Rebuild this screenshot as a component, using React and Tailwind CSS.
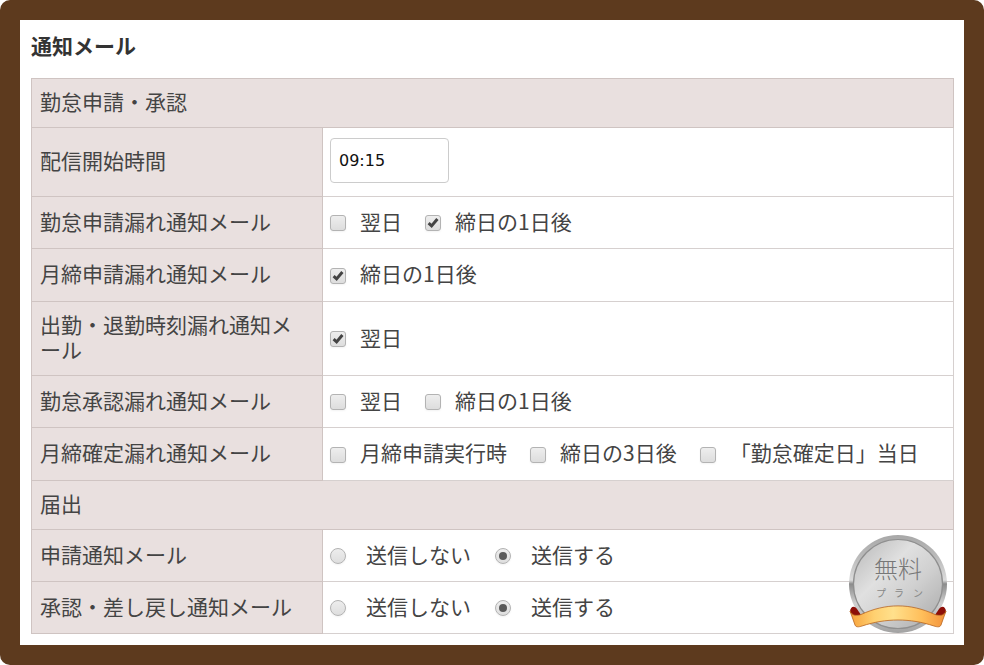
import { useState } from "react";
import clsx from "clsx";

const sections = [
  {
    title: "勤怠申請・承認",
    rows: [
      { id: "start", label: "配信開始時間", type: "time", height: "h-[69px]" },
      {
        id: "daily-missing",
        label: "勤怠申請漏れ通知メール",
        type: "checkbox",
        options: [
          { label: "翌日", checked: false },
          { label: "締日の1日後", checked: true },
        ],
      },
      {
        id: "monthly-missing",
        label: "月締申請漏れ通知メール",
        type: "checkbox",
        height: "h-[53px]",
        options: [{ label: "締日の1日後", checked: true }],
      },
      {
        id: "clock-missing",
        label: "出勤・退勤時刻漏れ通知メール",
        type: "checkbox",
        height: "h-[74px]",
        options: [{ label: "翌日", checked: true }],
      },
      {
        id: "approval-missing",
        label: "勤怠承認漏れ通知メール",
        type: "checkbox",
        options: [
          { label: "翌日", checked: false },
          { label: "締日の1日後", checked: false },
        ],
      },
      {
        id: "closing-missing",
        label: "月締確定漏れ通知メール",
        type: "checkbox",
        height: "h-[53px]",
        options: [
          { label: "月締申請実行時", checked: false },
          { label: "締日の3日後", checked: false },
          { label: "「勤怠確定日」当日", checked: false },
        ],
      },
    ],
  },
  {
    title: "届出",
    rows: [
      { id: "request", label: "申請通知メール", type: "radio" },
      { id: "approve", label: "承認・差し戻し通知メール", type: "radio" },
    ],
  },
];

const CheckOption = ({ label, checked }) => (
  <label className="flex items-center gap-3.5">
    <span className="mt-1 grid size-4 shrink-0">
      <input
        type="checkbox"
        defaultChecked={checked}
        className="peer col-start-1 row-start-1 size-4 appearance-none rounded-[3px] border border-[#b3b3b3] bg-linear-to-b from-[#eeeeee] to-[#dddddd] shadow-xs"
      />
      <svg
        viewBox="0 0 16 16"
        className="pointer-events-none invisible col-start-1 row-start-1 size-4 peer-checked:visible"
      >
        <path d="M3.6 8.2 L6.6 10.9 L12.4 4" fill="none" stroke="#444444" strokeWidth="3" />
      </svg>
    </span>
    {label}
  </label>
);

const RadioOption = ({ name, label, checked, onChange }) => (
  <label className="flex items-center gap-5">
    <span className="mt-1 grid size-4 shrink-0 place-items-center">
      <input
        type="radio"
        name={name}
        checked={checked}
        onChange={onChange}
        className="peer col-start-1 row-start-1 size-4 appearance-none rounded-full border border-[#b3b3b3] bg-linear-to-b from-[#ededed] to-[#dedede] shadow-xs"
      />
      <span className="pointer-events-none invisible col-start-1 row-start-1 size-2 rounded-full bg-[#5a5a5a] peer-checked:visible" />
    </span>
    {label}
  </label>
);

const SendChoice = ({ name }) => {
  const [send, setSend] = useState(true);

  return (
    <div className="flex gap-6">
      <RadioOption name={name} label="送信しない" checked={!send} onChange={() => setSend(false)} />
      <RadioOption name={name} label="送信する" checked={send} onChange={() => setSend(true)} />
    </div>
  );
};

const FreePlanBadge = () => (
  <svg viewBox="0 0 100 100" className="absolute right-4 bottom-[11px] size-[100px]">
    <defs>
      <linearGradient id="rim" x1="0" y1="0" x2="0" y2="1">
        <stop offset="0" stopColor="#a8a8a8" />
        <stop offset="0.25" stopColor="#bdbdbd" />
        <stop offset="0.46" stopColor="#dcdcdc" />
        <stop offset="0.5" stopColor="#8c8c8c" />
        <stop offset="0.7" stopColor="#d0d0d0" />
        <stop offset="1" stopColor="#a2a2a2" />
      </linearGradient>
      <linearGradient id="face" x1="0" y1="0" x2="1" y2="1">
        <stop offset="0.1" stopColor="#c2c2c2" />
        <stop offset="0.36" stopColor="#e0e0e0" />
        <stop offset="0.6" stopColor="#d0d0d0" />
        <stop offset="0.9" stopColor="#b2b2b2" />
      </linearGradient>
      <linearGradient id="ribbon" x1="0" y1="0" x2="1" y2="0">
        <stop offset="0" stopColor="#f7a13a" />
        <stop offset="0.25" stopColor="#ffd070" />
        <stop offset="0.45" stopColor="#ffe08c" />
        <stop offset="0.75" stopColor="#ffbe5a" />
        <stop offset="1" stopColor="#f2913a" />
      </linearGradient>
    </defs>
    <circle cx="50" cy="50" r="49" fill="url(#rim)" />
    <circle cx="50" cy="50" r="44.5" fill="url(#face)" stroke="#8f8f8f" strokeWidth="1.2" />
    <text x="50" y="44" textAnchor="middle" fontSize="24" fontWeight="300" fill="#777777">
      無料
    </text>
    <text x="33 51 70" y="63" textAnchor="middle" fontSize="10" fontWeight="400" fill="#888888">
      プラン
    </text>
    {/* ribbon tails behind the front band */}
    <path d="M2 78 C2 73 6 71 9 75 L13 81 L5 82 Z" fill="#8d0f08" />
    <path d="M98 78 C98 73 94 71 91 75 L87 81 L95 82 Z" fill="#8d0f08" />
    <path
      d="M2 77 C4 82 9 82 13 80.5 C38 69 62 69 87 80.5 C91 82 96 82 98 77 L93 91 C92 93.500 89 93 86 92 C62 84 38 84 14 92 C11 93 8 93.500 7 91 Z"
      fill="url(#ribbon)"
      stroke="#b8641f"
      strokeWidth="0.8"
    />
  </svg>
);

export default function App() {
  const [startTime, setStartTime] = useState("09:15");

  return (
    <main className="relative rounded-[10px] border-20 border-[#5d3a1e] bg-white pt-[11px] pr-[10px] pb-[11px] pl-[11px] font-['Noto_Sans_CJK_JP',sans-serif] text-[21px] leading-[25px] text-[#444444]">
      <h1 className="mb-[19px] leading-7 font-bold text-[#333333]">通知メール</h1>

      <table className="w-full table-fixed border-collapse">
        <colgroup>
          <col className="w-[291px]" />
          <col />
        </colgroup>
        {sections.map((section) => (
          <tbody key={section.title}>
            <tr>
              <th
                colSpan={2}
                className="h-[49px] border border-[#cfc4c2] bg-[#e9e0df] px-2 pb-[3px] text-left font-normal"
              >
                {section.title}
              </th>
            </tr>
            {section.rows.map((row) => (
              <tr key={row.id} className={clsx(row.height ?? "h-[52px]")}>
                <th
                  scope="row"
                  className="border border-[#cfc4c2] bg-[#e9e0df] pr-5 pb-[3px] pl-2 text-left font-normal break-all"
                >
                  {row.type === "time" ? <label htmlFor={row.id}>{row.label}</label> : row.label}
                </th>
                <td className="border border-[#d6d0cf] px-[7px] pb-[3px]">
                  {row.type === "time" && (
                    <input
                      id={row.id}
                      type="text"
                      value={startTime}
                      onChange={(e) => setStartTime(e.target.value)}
                      className="block h-[45px] w-[119px] rounded-[4px] border border-[#cccccc] px-2 font-['DejaVu_Sans',sans-serif] text-base text-[#111111]"
                    />
                  )}
                  {row.type === "checkbox" && (
                    <div className="flex gap-[23px]">
                      {row.options.map((option) => (
                        <CheckOption key={option.label} {...option} />
                      ))}
                    </div>
                  )}
                  {row.type === "radio" && <SendChoice name={row.id} />}
                </td>
              </tr>
            ))}
          </tbody>
        ))}
      </table>

      <FreePlanBadge />
    </main>
  );
}
